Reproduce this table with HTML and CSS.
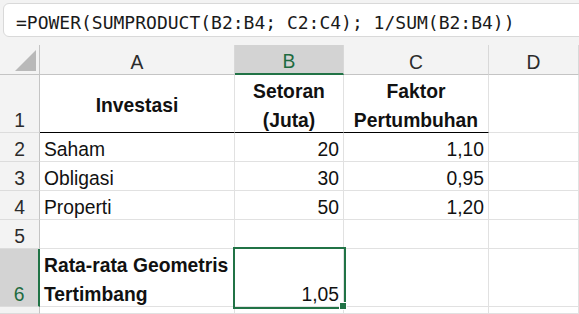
FILE: index.html
```html
<!DOCTYPE html>
<html lang="id">
<head>
<meta charset="utf-8">
<title>Rata-rata Geometris Tertimbang</title>
<link rel="stylesheet" href="styles.css">
</head>
<body>
<div class="fxbar">
  <div class="fx">=POWER(SUMPRODUCT(B2:B4; C2:C4); 1/SUM(B2:B4))</div>
</div>
<div class="sheet">
  <div class="corner"><svg width="21" height="21" viewBox="0 0 21 21"><polygon points="21,0 21,21 0,21" fill="#b9b9b9"/></svg></div>
  <div class="colh"><span>A</span></div>
  <div class="colh sel"><span>B</span></div>
  <div class="colh"><span>C</span></div>
  <div class="colh"><span>D</span></div>

  <div class="rowh"><span>1</span></div>
  <div class="c b ctr mid rule"><span>Investasi</span></div>
  <div class="c b ctr rule"><span>Setoran<br>(Juta)</span></div>
  <div class="c b ctr rule"><span>Faktor<br>Pertumbuhan</span></div>
  <div class="c"></div>

  <div class="rowh"><span>2</span></div>
  <div class="c"><span>Saham</span></div>
  <div class="c num"><span>20</span></div>
  <div class="c num"><span>1,10</span></div>
  <div class="c"></div>

  <div class="rowh"><span>3</span></div>
  <div class="c"><span>Obligasi</span></div>
  <div class="c num"><span>30</span></div>
  <div class="c num"><span>0,95</span></div>
  <div class="c"></div>

  <div class="rowh"><span>4</span></div>
  <div class="c"><span>Properti</span></div>
  <div class="c num"><span>50</span></div>
  <div class="c num"><span>1,20</span></div>
  <div class="c"></div>

  <div class="rowh"><span>5</span></div>
  <div class="c"></div>
  <div class="c"></div>
  <div class="c"></div>
  <div class="c"></div>

  <div class="rowh sel"><span>6</span></div>
  <div class="c b"><span>Rata-rata Geometris Tertimbang</span></div>
  <div class="c num active"><span>1,05</span></div>
  <div class="c"></div>
  <div class="c"></div>

  <div class="rowh"></div>
  <div class="c"></div>
  <div class="c"></div>
  <div class="c"></div>
  <div class="c"></div>
</div>
</body>
</html>
```
FILE: styles.css
```css
html, body {
  margin: 0;
  padding: 0;
  background: #f3f3f3;
  overflow: hidden;
}

body {
  width: 579px;
  height: 314px;
  font-family: "Liberation Sans", Arial, sans-serif;
  font-size: 19.3px;
  color: #111;
}

/* formula bar */
.fxbar {
  height: 45px;
  box-sizing: border-box;
  padding: 3px 0 0 3px;
}

.fx {
  box-sizing: border-box;
  height: 34px;
  margin-right: -12px;
  padding: 7px 0 0 12px;
  background: #fff;
  border: 1px solid #d9d9d9;
  border-radius: 6px;
  font-family: "DejaVu Sans Mono", "Liberation Mono", monospace;
  font-size: 18px;
  line-height: 24px;
  color: #1a1a1a;
  white-space: nowrap;
}

/* grid */
.sheet {
  display: grid;
  grid-template-columns: 40px 195px 109px 145px 1fr;
  grid-template-rows: 30px 58px 29px 29px 29px 29px 58px 7px;
  background: #fff;
}

.sheet > div {
  box-sizing: border-box;
  display: flex;
  align-items: flex-end;
  min-width: 0;
  line-height: 29px;
}

.sheet > div > span {
  margin-bottom: -3px;
}

.corner {
  background: #f3f3f3;
  border-right: 1px solid #c4c4c4;
  border-bottom: 1px solid #c4c4c4;
  justify-content: flex-end;
  padding: 0 3px 3px 0;
}

.corner svg {
  display: block;
}

.colh {
  background: #f3f3f3;
  border-right: 1px solid #d8d8d8;
  border-bottom: 1px solid #c4c4c4;
  justify-content: center;
  color: #2b2b2b;
}

.colh.sel {
  background: #d3d3d3;
  color: #1e6b40;
  border-bottom: 2px solid #217346;
}

.rowh {
  background: #f3f3f3;
  border-right: 1px solid #c4c4c4;
  border-bottom: 1px solid #dcdcdc;
  justify-content: center;
  color: #2b2b2b;
}

.rowh.sel {
  background: #d3d3d3;
  color: #1e6b40;
  border-right: 2px solid #217346;
}

.c {
  border-right: 1px solid #e1e1e1;
  border-bottom: 1px solid #e1e1e1;
  padding: 0 4px;
  white-space: normal;
}

.c.b {
  font-weight: bold;
}

.c.ctr {
  justify-content: center;
  text-align: center;
}

.c.mid {
  align-items: center;
}

.c.mid > span {
  margin: 3px 0 0;
}

.c.rule {
  border-bottom-color: #000;
}

.c.num {
  justify-content: flex-end;
}

.c.active {
  position: relative;
  outline: 2px solid #217346;
  outline-offset: 0;
  z-index: 1;
}

.c.active::after {
  content: "";
  position: absolute;
  right: -3px;
  bottom: -3px;
  width: 6px;
  height: 6px;
  background: #217346;
  box-shadow: 0 0 0 1px #fff;
}
```
